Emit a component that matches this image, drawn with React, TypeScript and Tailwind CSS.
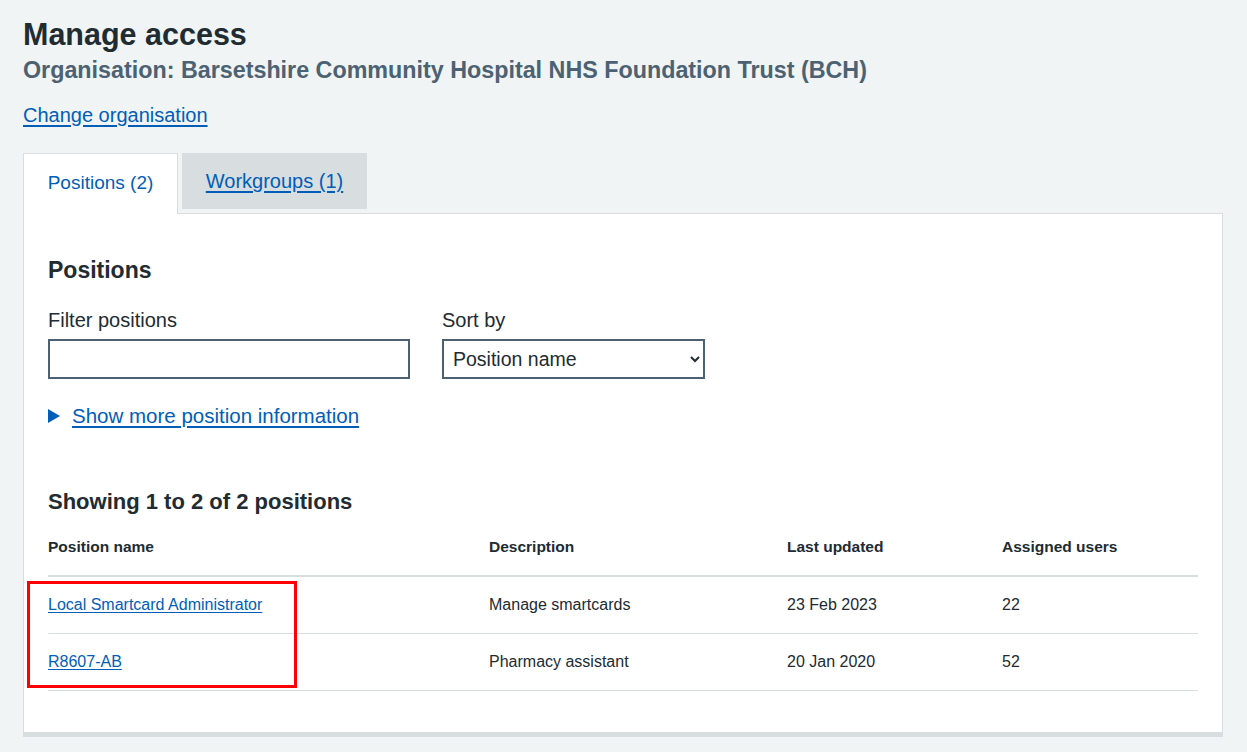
import React from 'react';

const rows = [
    { name: 'Local Smartcard Administrator', description: 'Manage smartcards', updated: '23 Feb 2023', users: '22' },
    { name: 'R8607-AB', description: 'Pharmacy assistant', updated: '20 Jan 2020', users: '52' },
];

const font = { fontFamily: '"Liberation Sans", Arial, sans-serif' };

export default function App() {
    return (
        <div className="min-h-screen bg-[#f0f4f5] pl-[23px] pr-[24px] pt-[14px] text-[#212b32]" style={font}>
            <h1 className="text-[30.5px] font-bold leading-[40px]">Manage access</h1>
            <p className="text-[23.3px] font-bold leading-[32px] text-[#4c6272]">
                Organisation: Barsetshire Community Hospital NHS Foundation Trust (BCH)
            </p>
            <a href="#" className="mt-[15px] inline-block text-[20px] leading-[28px] text-[#005eb8] underline underline-offset-[3px]">
                Change organisation
            </a>

            <div className="mt-[24px] flex items-start gap-[4px]">
                <div className="relative z-10 -mb-px flex h-[61px] w-[155px] items-center justify-center border border-b-0 border-[#d8dde0] bg-white pb-[2px] text-[19px] text-[#005eb8]">
                    Positions (2)
                </div>
                <a href="#" className="flex h-[56px] w-[185px] items-center justify-center bg-[#d8dde0] text-[20px] text-[#005eb8] underline underline-offset-[3px]">
                    Workgroups (1)
                </a>
            </div>

            <div className="border border-[#d8dde0] bg-white px-[24px] pb-[41px] pt-[40px] shadow-[0_4px_0_#d8dde0]">
                <h2 className="text-[23px] font-bold leading-[32px]">Positions</h2>

                <div className="mt-[20px] flex gap-[32px]">
                    <div className="flex flex-col gap-[5px]">
                        <label className="text-[20px] leading-[28px]">Filter positions</label>
                        <input className="h-[40px] w-[362px] border-2 border-[#4c6272] bg-white px-[8px] text-[19px]" />
                    </div>
                    <div className="flex flex-col gap-[5px]">
                        <label className="text-[20px] leading-[28px]">Sort by</label>
                        <select className="h-[40px] w-[263px] border-2 border-[#4c6272] bg-white pl-[5px] pr-[6px] text-[19.5px] text-[#212b32]" style={font}>
                            <option>Position name</option>
                            <option>Last updated</option>
                        </select>
                    </div>
                </div>

                <div className="mt-[23px] flex items-center gap-[12px] text-[20.5px] leading-[28px]">
                    <svg width="12" height="14" viewBox="0 0 12 14" className="shrink-0">
                        <polygon points="0,0 12,7 0,14" fill="#005eb8" />
                    </svg>
                    <a href="#" className="text-[#005eb8] underline underline-offset-[3px]">Show more position information</a>
                </div>

                <h3 className="mt-[57px] text-[22px] font-bold leading-[30px]">Showing 1 to 2 of 2 positions</h3>

                <div className="relative mt-[6px]">
                    <table className="w-full table-fixed border-collapse text-[16px] leading-6">
                        <colgroup>
                            <col className="w-[441px]" />
                            <col className="w-[298px]" />
                            <col className="w-[215px]" />
                            <col />
                        </colgroup>
                        <thead>
                            <tr className="border-b-2 border-[#d8dde0] text-left text-[15.5px]">
                                <th className="pb-[16px] pt-[12px] pr-4 font-bold">Position name</th>
                                <th className="pb-[16px] pt-[12px] pr-4 font-bold">Description</th>
                                <th className="pb-[16px] pt-[12px] pr-4 font-bold">Last updated</th>
                                <th className="pb-[16px] pt-[12px] pr-4 font-bold">Assigned users</th>
                            </tr>
                        </thead>
                        <tbody>
                            {rows.map((row) => (
                                <tr key={row.name} className="border-b border-[#d8dde0]">
                                    <td className="py-[16px] pr-4">
                                        <a href="#" className="text-[#005eb8] underline underline-offset-2">{row.name}</a>
                                    </td>
                                    <td className="py-[16px] pr-4">{row.description}</td>
                                    <td className="py-[16px] pr-4">{row.updated}</td>
                                    <td className="py-[16px] pr-4">{row.users}</td>
                                </tr>
                            ))}
                        </tbody>
                    </table>
                    {/* highlight box drawn over the first column */}
                    <div className="pointer-events-none absolute left-[-21px] top-[58px] h-[107px] w-[270px] border-[3px] border-[#ff0000]" />
                </div>
            </div>
        </div>
    );
}
